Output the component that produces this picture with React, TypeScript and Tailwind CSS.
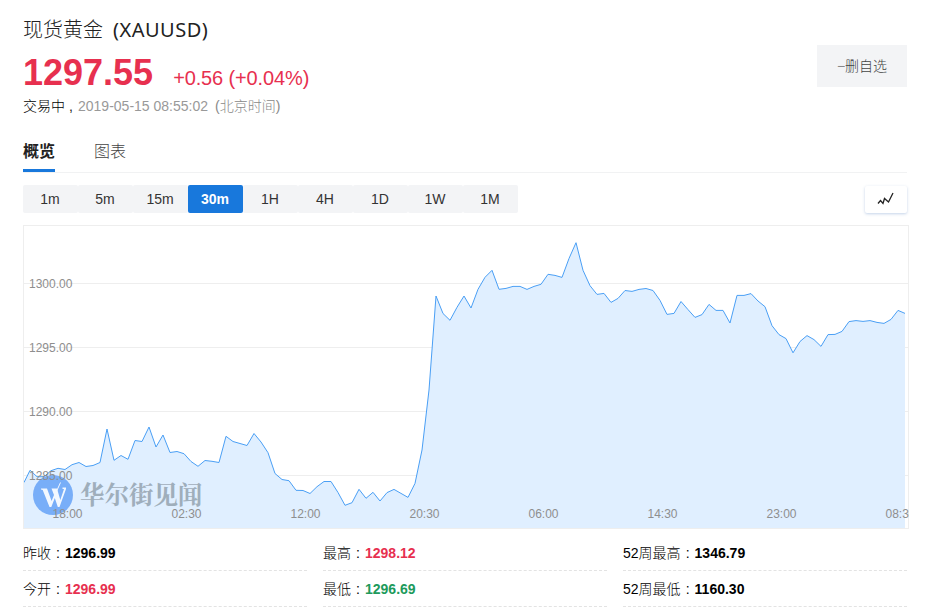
import React from "react";

const periods = ["1m", "5m", "15m", "30m", "1H", "4H", "1D", "1W", "1M"];

const priceLabels = [
  { text: "1300.00", y: 283.5 },
  { text: "1295.00", y: 347.5 },
  { text: "1290.00", y: 411.5 },
  { text: "1285.00", y: 475.5 },
];

const timeLabels = [
  { text: "18:00", x: 67.5 },
  { text: "02:30", x: 186.5 },
  { text: "12:00", x: 305.5 },
  { text: "20:30", x: 424.5 },
  { text: "06:00", x: 543.5 },
  { text: "14:30", x: 662.5 },
  { text: "23:00", x: 781.5 },
  { text: "08:30", x: 900.5 },
];

// one point every 7px
const points = [
  482.5, 470.3, 476.7, 476.7, 470.7, 468.3, 469.5, 464.7, 462.5, 466.5, 465.5,
  462.5, 429, 460.3, 455.5, 459.3, 440.5, 441.5, 427, 447, 435, 452.5, 451.5,
  453.7, 461.5, 466.3, 460.5, 461.3, 462.5, 436.3, 441.5, 443.5, 445.5, 433.5,
  442, 452.7, 473.5, 479.5, 480.7, 490.3, 490.5, 493.5, 486.7, 481.5, 481.5,
  492.5, 505.3, 502.7, 489.3, 498.3, 492.3, 501, 492.6, 489.4, 493.4, 497.4,
  483.4, 450, 390, 296, 313.5, 320.3, 307.3, 296, 308, 289.3, 277.3, 270.3,
  289.3, 288.4, 286.4, 286.4, 289.4, 286.4, 284.3, 274.3, 275.4, 277.4, 258.5,
  242.7, 270.3, 285.7, 294.4, 293.4, 302.4, 298.4, 290.5, 291.4, 289.4, 288.5,
  290.5, 300.4, 314.4, 313.4, 301.5, 309.6, 317.4, 314.6, 304.4, 310.4, 310.4,
  323, 295.4, 295.4, 293.6, 301, 306.7, 325.7, 334.6, 338.6, 352.8, 341.5,
  335.6, 339.6, 346.4, 334.6, 334.4, 331.4, 321.6, 320.6, 321.4, 320.6, 322.4,
  323.4, 319.4, 310.4, 313.4,
];

const linePath = points
  .map((y, i) => `${i === 0 ? "M" : "L"}${i === 0 ? 24 : 23 + i * 7} ${y}`)
  .join(" ");

interface Stat {
  label: string;
  value: string;
  color: string;
}

const stats: Stat[] = [
  { label: "昨收", value: "1296.99", color: "text-black" },
  { label: "最高", value: "1298.12", color: "text-[#e7304f]" },
  { label: "52周最高", value: "1346.79", color: "text-black" },
  { label: "今开", value: "1296.99", color: "text-[#e7304f]" },
  { label: "最低", value: "1296.69", color: "text-[#209a5b]" },
  { label: "52周最低", value: "1160.30", color: "text-black" },
];

const Header = () => (
  <header className="flex h-[115px] items-start justify-between pt-[15px]">
    <div>
      <h1 className="h-8 text-xl leading-7 font-light text-[#222]">
        <span className="font-['Noto_Sans_CJK_SC',sans-serif]">现货黄金</span>
        <span className="ml-2.5 font-['Noto_Sans',sans-serif] font-normal tracking-[0.5px]">
          (XAUUSD)
        </span>
      </h1>
      <div className="flex h-[51px] items-center text-[#e7304f]">
        <span className="text-4xl font-bold">1297.55</span>
        <span className="ml-5 pt-2.5 text-xl tracking-[-0.13px]">
          +0.56 (+0.04%)
        </span>
      </div>
      <div className="flex h-4 items-center text-sm leading-4 font-light text-[#888]">
        <span className="text-black">交易中</span>
        <span className="w-[13px] pl-1 text-[#222]">,</span>
        <span className="text-[#999]">2019-05-15 08:55:02</span>
        <span className="ml-[7px]">(北京时间)</span>
      </div>
    </div>
    <button className="mt-[30px] h-[42px] w-[90px] bg-[#f3f4f6] text-sm font-light text-[#444]">
      <span className="text-[#888]">−</span>删自选
    </button>
  </header>
);

const Tabs = () => (
  <nav className="flex h-[58px] items-end gap-[39px] border-b border-[#f1f2f3] text-base">
    <a className="h-[37px] border-b-3 border-[#1878dc] leading-[33px] font-bold text-[#222]">
      概览
    </a>
    <a className="h-[37px] leading-[33px] font-light text-[#444]">图表</a>
  </nav>
);

const PeriodBar = () => (
  <div className="mt-3 flex h-7 items-center justify-between">
    <div className="flex">
      {periods.map((p) => (
        <button
          key={p}
          className={`h-7 w-[55px] rounded-xs pr-px text-sm ${
            p === "30m"
              ? "bg-[#1878dc] font-bold text-white"
              : "bg-[#f3f4f6] text-[#333]"
          }`}
        >
          {p}
        </button>
      ))}
    </div>
    <button className="flex h-[27px] w-[42px] items-center justify-center rounded-xs bg-white shadow-[0_1px_3px_rgba(60,110,180,0.3)]">
      <svg width="18" height="14" viewBox="0 0 18 14" fill="none">
        <path
          d="M1 11.5L3.5 8.5L6 11.5L7.5 6.5L11.5 10L16 1"
          stroke="#222"
          strokeWidth="1.3"
        />
      </svg>
    </button>
  </div>
);

const Watermark = () => (
  <g opacity="0.6">
    <circle cx="53" cy="495" r="20" fill="#3483f5" />
    <path
      d="M41 488.5H47L51.6 501L54 495L51.5 488.5H57L60.3 500L64 489H62.5V487.5H66V489L59.5 507H57.8L54.8 498L51.3 507H49.5L42.7 490L41 489.5Z"
      fill="#fff"
    />
    <path d="M60.5 482.5L56 492.5" stroke="#fff" strokeWidth="1" />
    <text
      x="80"
      y="504"
      fontSize="24.5"
      fontWeight="700"
      fill="#74838f"
      className="font-['Noto_Serif_CJK_SC','Noto_Sans_CJK_SC',serif]"
    >
      华尔街见闻
    </text>
  </g>
);

const Chart = () => (
  <svg
    className="mt-3 -mr-0.5 block h-[304px] w-[886px]"
    viewBox="23 225 886 304"
  >
    {priceLabels.map((l) => (
      <path key={l.text} d={`M24 ${l.y}H908`} stroke="#eee" />
    ))}
    <path d={`${linePath}V528H24Z`} fill="#e0efff" />
    <path d={linePath} fill="none" stroke="#4a9ff5" />
    <rect x="23.5" y="225.5" width="885" height="303" fill="none" stroke="#eee" />
    <Watermark />
    <g fill="#8e8e8e" fontSize="12">
      {priceLabels.map((l) => (
        <text key={l.text} x="29" y={l.y + 4.5}>
          {l.text}
        </text>
      ))}
      {timeLabels.map((l) => (
        <text key={l.text} x={l.x} y="518" textAnchor="middle">
          {l.text}
        </text>
      ))}
    </g>
  </svg>
);

const StatCell = ({ label, value, color }: Stat) => (
  <div className="flex h-9 items-center border-b border-dashed border-[#e3e3e3] text-sm text-black">
    <span className="font-light">{label}</span>
    <span className="w-3.5 text-center">:</span>
    <span className={`font-bold ${color}`}>{value}</span>
  </div>
);

export default function App() {
  return (
    <div className="h-[615px] w-[928px] overflow-hidden bg-white pr-[21px] pl-[23px] font-['Liberation_Sans','Noto_Sans_CJK_SC',sans-serif]">
      <Header />
      <Tabs />
      <PeriodBar />
      <Chart />
      <div className="mt-1.5 grid grid-cols-[284px_284px_284px] gap-x-4">
        {stats.map((s) => (
          <StatCell key={s.label} {...s} />
        ))}
      </div>
    </div>
  );
}
